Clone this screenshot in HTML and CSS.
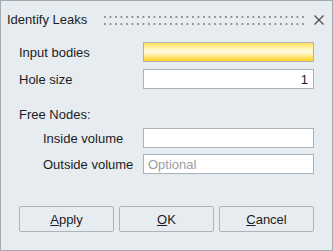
FILE: index.html
```html
<!DOCTYPE html>
<html lang="en">
<head>
    <meta charset="UTF-8">
    <title>Identify Leaks</title>
    <link rel="stylesheet" href="styles.css">
</head>
<body>

<div class="dialog">
    <div class="titlebar">
        <span class="title">Identify Leaks</span>
        <span class="grip"></span>
        <svg class="close" width="12" height="12" viewBox="0 0 12 12">
            <path d="M1.5 1.5 L10.5 10.5 M10.5 1.5 L1.5 10.5" stroke="#4d4f52" stroke-width="1.3" fill="none"/>
        </svg>
    </div>

    <div class="form">
        <div class="row">
            <label class="label">Input bodies</label>
            <div class="field field-select"></div>
        </div>
        <div class="row">
            <label class="label" for="hole">Hole size</label>
            <input class="field num" id="hole" type="text" value="1">
        </div>

        <div class="group">Free Nodes:</div>
        <div class="row row-sub">
            <label class="label sub" for="inside">Inside volume</label>
            <input class="field" id="inside" type="text">
        </div>
        <div class="row">
            <label class="label sub" for="outside">Outside volume</label>
            <input class="field" id="outside" type="text" placeholder="Optional">
        </div>

        <div class="buttons">
            <button class="btn"><u>A</u>pply</button>
            <button class="btn"><u>O</u>K</button>
            <button class="btn"><u>C</u>ancel</button>
        </div>
    </div>
</div>

</body>
</html>
```

FILE: styles.css
```css
body {
    margin: 0;
    font-family: "Liberation Sans", Arial, sans-serif;
    font-size: 13px;
    color: #1c1c24;
}
.dialog {
    width: 333px;
    height: 251px;
    box-sizing: border-box;
    border: 1px solid #a3aab0;
    background: #e6ecf0;
}
.titlebar {
    height: 36px;
    display: flex;
    align-items: center;
    padding-left: 6px;
}
.title {
    width: 97px;
}
.grip {
    width: 200px;
    height: 9px;
    margin-top: 2px;
    background-image: linear-gradient(90deg, #8c9196 2px, transparent 2px),
                      linear-gradient(90deg, #8c9196 2px, transparent 2px);
    background-size: 5.5px 2px, 5.5px 2px;
    background-position: 0 0, 0 7px;
    background-repeat: repeat-x;
}
.close {
    margin-left: 9px;
    margin-top: 1px;
}
.form {
    padding: 5px 18px 0 18px;
}
.row {
    display: flex;
    align-items: center;
    height: 20px;
    margin-bottom: 7px;
}
.label {
    width: 124px;
}
.label.sub {
    padding-left: 24px;
    box-sizing: border-box;
}
.field {
    width: 171px;
    height: 20px;
    box-sizing: border-box;
    border: 1px solid #abb1b6;
    background: #fff;
    font-family: inherit;
    font-size: 13px;
    color: #1c1c24;
    padding: 0 4px;
    margin: 0;
    outline: none;
}
.field::placeholder {
    color: #9a9ea2;
}
.field-select {
    background: linear-gradient(#ffe15c 0%, #ffefa0 25%, #fffbe4 45%, #fff0a8 65%, #ffd21e 100%);
}
.num {
    text-align: right;
    padding-right: 5px;
}
.group {
    height: 20px;
    line-height: 20px;
    margin-top: 16px;
    margin-bottom: 3px;
}
.row-sub {
    margin-bottom: 6px;
}
.buttons {
    display: flex;
    gap: 5px;
    margin-top: 32px;
}
.btn {
    width: 95px;
    height: 26px;
    border: 1px solid #adb3b8;
    border-radius: 2px;
    background: #e6ecf0;
    font-family: inherit;
    font-size: 13px;
    color: #1c1c24;
    padding: 0;
}
```
